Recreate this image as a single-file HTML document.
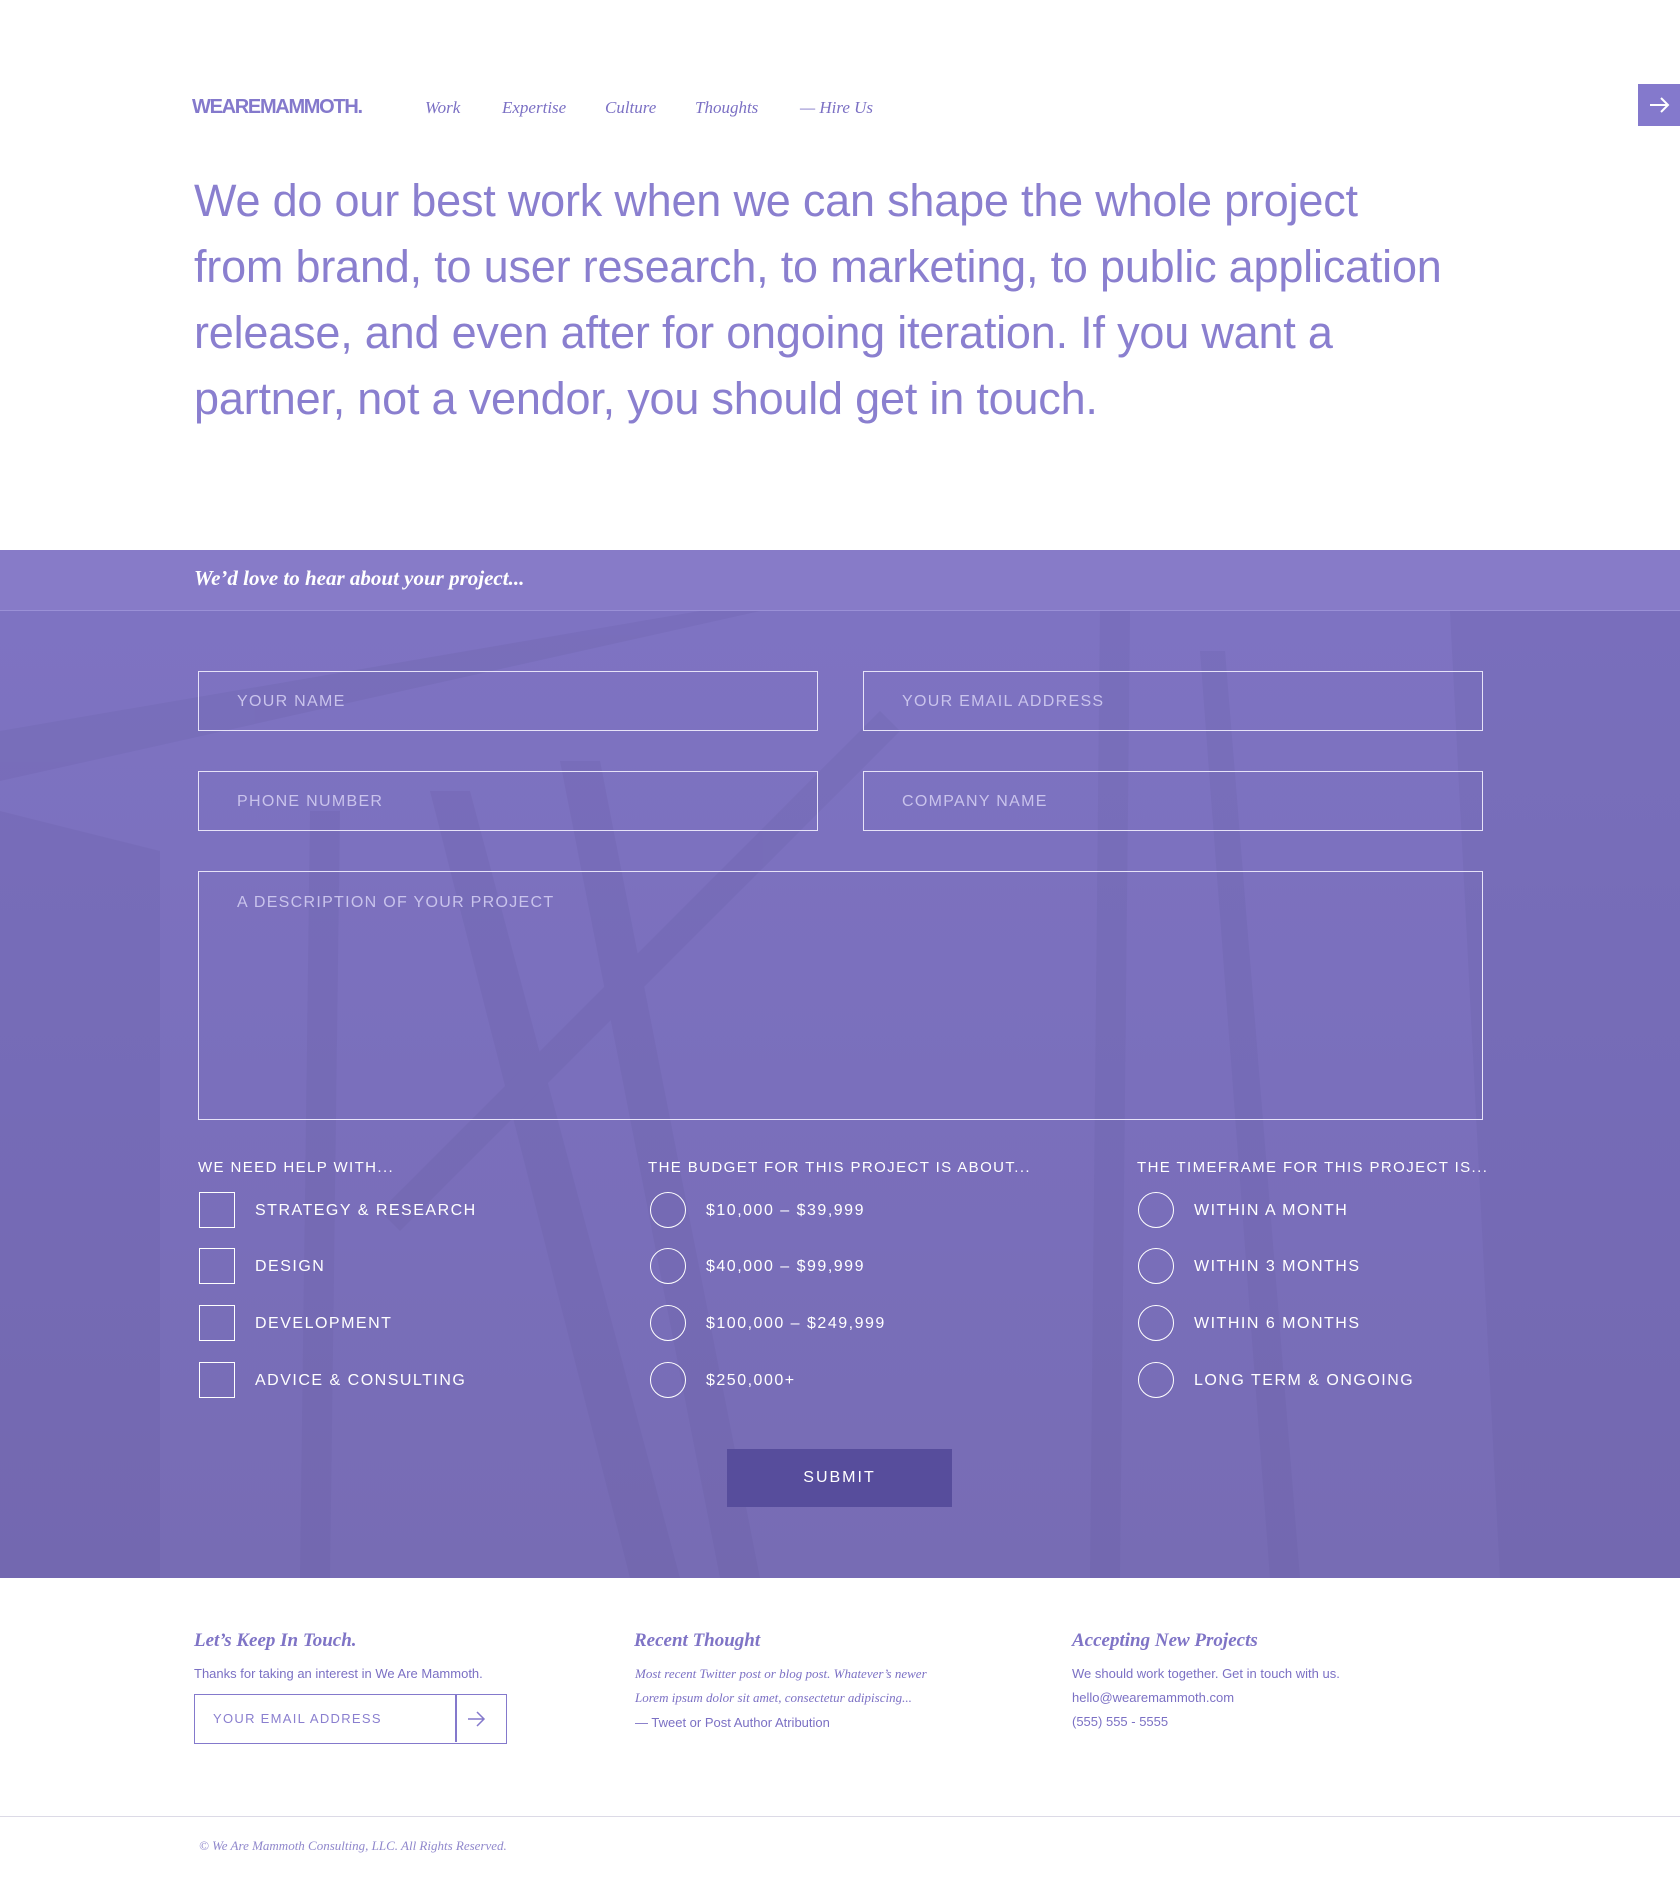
<!DOCTYPE html>
<html><head><meta charset="utf-8"><style>
*{margin:0;padding:0;box-sizing:border-box}
body{width:1680px;height:1879px;background:#fff;font-family:"Liberation Sans",sans-serif;color:#8a7fcf;position:relative;overflow:hidden}
.serif{font-family:"Liberation Serif",serif;font-style:italic}
.abs{position:absolute}
.logo{left:192px;top:96px;font-weight:bold;font-size:20px;letter-spacing:-1.3px;color:#8479cc}
.nav{top:98px;font-size:17px;color:#7b70c4}
.btn-tr{left:1638px;top:84px;width:42px;height:42px;background:#8479cc}
h1{position:absolute;left:194px;top:168px;width:1320px;font-weight:normal;font-size:45px;line-height:66px;color:#8a7fcf;letter-spacing:-0.2px}
.band{left:0;top:550px;width:1680px;height:61px;background:#877bc8;border-bottom:1px solid #9a90d6}
.band span{position:absolute;left:194px;top:16px;font-size:21px;font-weight:bold;color:#fff}
.form{left:0;top:611px;width:1680px;height:967px;background:linear-gradient(180deg,#7e73c2 0%,#7a6fbc 50%,#776cb4 100%);overflow:hidden}
.inp{position:absolute;border:1.5px solid #e6e2f8;color:#c9c3ec;font-size:16px;letter-spacing:1.3px;padding-left:38px}
.lbl{position:absolute;color:#fff;font-size:15px;letter-spacing:1.4px}
.opt{position:absolute;color:#fff;font-size:16px;letter-spacing:1.5px}
.box{position:absolute;width:36px;height:36px;border:1.5px solid #fff}
.rad{position:absolute;width:36px;height:36px;border:1.5px solid #fff;border-radius:50%}
.sub{left:727px;top:1449px;width:225px;height:58px;background:#574d9c;color:#fff;font-size:16px;letter-spacing:2px;text-align:center;line-height:58px}
.fh{top:1628px;font-size:19px;font-weight:bold;color:#7f74c6}
.ft{font-size:13px;color:#7b70c4}
</style></head><body>
<div class="abs logo">WEAREMAMMOTH.</div>
<div class="abs nav serif" style="left:425px">Work</div>
<div class="abs nav serif" style="left:502px">Expertise</div>
<div class="abs nav serif" style="left:605px">Culture</div>
<div class="abs nav serif" style="left:695px">Thoughts</div>
<div class="abs nav serif" style="left:800px">— Hire Us</div>
<div class="abs btn-tr"><svg width="42" height="42"><path d="M12 21h18M23 14l7 7-7 7" stroke="#fff" stroke-width="2" fill="none"/></svg></div>
<h1>We do our best work when we can shape the whole project<br>from brand, to user research, to marketing, to public application<br>release, and even after for ongoing iteration. If you want a<br>partner, not a vendor, you should get in touch.</h1>
<div class="abs band"><span class="serif">We’d love to hear about your project...</span></div>
<div class="abs form">
<svg class="abs" style="left:0;top:0" width="1680" height="967">
<g fill="#5f5599" opacity="0.15">
<polygon points="0,120 700,0 760,0 0,170"/>
<polygon points="430,180 470,180 680,967 630,967"/>
<polygon points="560,150 600,150 760,967 720,967"/>
<polygon points="310,200 340,200 330,967 300,967"/>
<polygon points="1100,0 1130,0 1120,967 1090,967"/>
<polygon points="1200,40 1225,40 1300,967 1270,967"/>
<polygon points="1450,0 1680,0 1680,967 1500,967"/>
<polygon points="0,200 160,240 160,967 0,967"/>
<polygon points="380,600 880,100 900,120 400,620"/>
</g></svg>
</div>
<div class="inp" style="left:198px;top:671px;width:620px;height:60px;line-height:59px">YOUR NAME</div>
<div class="inp" style="left:863px;top:671px;width:620px;height:60px;line-height:59px">YOUR EMAIL ADDRESS</div>
<div class="inp" style="left:198px;top:771px;width:620px;height:60px;line-height:59px">PHONE NUMBER</div>
<div class="inp" style="left:863px;top:771px;width:620px;height:60px;line-height:59px">COMPANY NAME</div>
<div class="inp" style="left:198px;top:871px;width:1285px;height:249px;padding-top:22px">A DESCRIPTION OF YOUR PROJECT</div>
<div class="lbl" style="left:198px;top:1159px">WE NEED HELP WITH...</div>
<div class="lbl" style="left:648px;top:1159px">THE BUDGET FOR THIS PROJECT IS ABOUT...</div>
<div class="lbl" style="left:1137px;top:1159px">THE TIMEFRAME FOR THIS PROJECT IS...</div>
<div class="box" style="left:199px;top:1192px"></div><div class="opt" style="left:255px;top:1202px">STRATEGY &amp; RESEARCH</div>
<div class="box" style="left:199px;top:1248px"></div><div class="opt" style="left:255px;top:1258px">DESIGN</div>
<div class="box" style="left:199px;top:1305px"></div><div class="opt" style="left:255px;top:1315px">DEVELOPMENT</div>
<div class="box" style="left:199px;top:1362px"></div><div class="opt" style="left:255px;top:1372px">ADVICE &amp; CONSULTING</div>
<div class="rad" style="left:650px;top:1192px"></div><div class="opt" style="left:706px;top:1202px">$10,000 – $39,999</div>
<div class="rad" style="left:650px;top:1248px"></div><div class="opt" style="left:706px;top:1258px">$40,000 – $99,999</div>
<div class="rad" style="left:650px;top:1305px"></div><div class="opt" style="left:706px;top:1315px">$100,000 – $249,999</div>
<div class="rad" style="left:650px;top:1362px"></div><div class="opt" style="left:706px;top:1372px">$250,000+</div>
<div class="rad" style="left:1138px;top:1192px"></div><div class="opt" style="left:1194px;top:1202px">WITHIN A MONTH</div>
<div class="rad" style="left:1138px;top:1248px"></div><div class="opt" style="left:1194px;top:1258px">WITHIN 3 MONTHS</div>
<div class="rad" style="left:1138px;top:1305px"></div><div class="opt" style="left:1194px;top:1315px">WITHIN 6 MONTHS</div>
<div class="rad" style="left:1138px;top:1362px"></div><div class="opt" style="left:1194px;top:1372px">LONG TERM &amp; ONGOING</div>
<div class="abs sub">SUBMIT</div>

<div class="abs fh serif" style="left:194px;top:1630px">Let’s Keep In Touch.</div>
<div class="abs fh serif" style="left:634px;top:1630px">Recent Thought</div>
<div class="abs fh serif" style="left:1072px;top:1630px">Accepting New Projects</div>
<div class="abs ft" style="left:194px;top:1666px">Thanks for taking an interest in We Are Mammoth.</div>
<div class="abs" style="left:194px;top:1694px;width:313px;height:50px;border:1.5px solid #8479cc"><span style="position:absolute;left:18px;top:16px;font-size:13px;letter-spacing:1.3px;color:#8a7fcf">YOUR EMAIL ADDRESS</span><div style="position:absolute;left:260px;top:0;width:1.5px;height:47px;background:#8479cc"></div><svg style="position:absolute;left:270px;top:14px" width="24" height="20"><path d="M3 10h16M12 3l7 7-7 7" stroke="#8479cc" stroke-width="1.5" fill="none"/></svg></div>
<div class="abs ft serif" style="left:635px;top:1666px">Most recent Twitter post or blog post. Whatever’s newer</div>
<div class="abs ft serif" style="left:635px;top:1690px">Lorem ipsum dolor sit amet, consectetur adipiscing...</div>
<div class="abs ft" style="left:635px;top:1715px">— Tweet or Post Author Atribution</div>
<div class="abs ft" style="left:1072px;top:1666px">We should work together. Get in touch with us.</div>
<div class="abs ft" style="left:1072px;top:1690px">hello@wearemammoth.com</div>
<div class="abs ft" style="left:1072px;top:1714px">(555) 555 - 5555</div>
<div class="abs" style="left:0;top:1816px;width:1680px;height:1px;background:#dcdae6"></div>
<div class="abs ft serif" style="left:199px;top:1838px;color:#9088cc">© We Are Mammoth Consulting, LLC. All Rights Reserved.</div>
</body></html>
